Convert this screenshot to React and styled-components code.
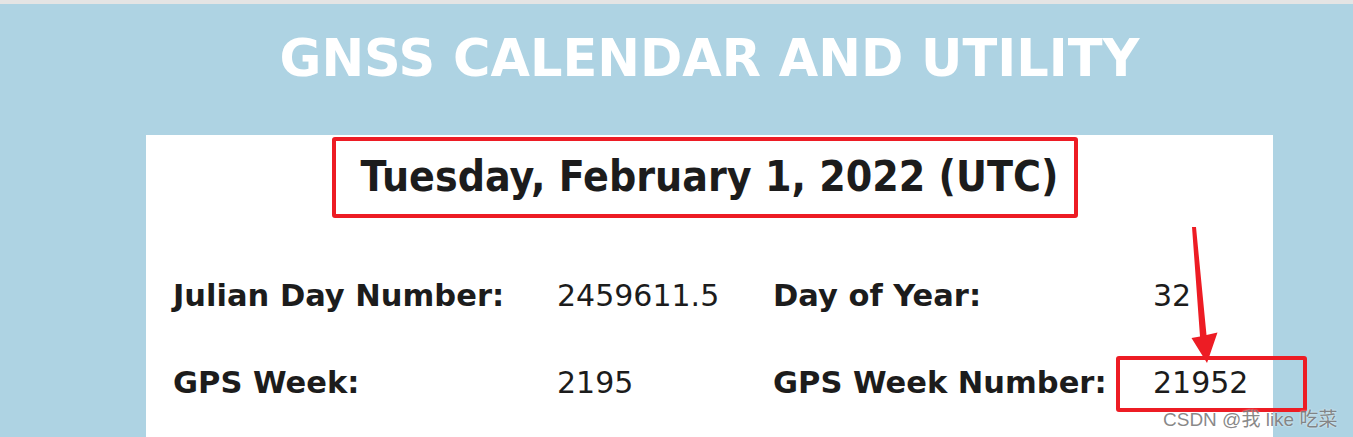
import styled, { createGlobalStyle } from "styled-components"

const GlobalStyle = createGlobalStyle`
body {
    margin: 0;
    background: #aed3e3;
    font-family: "DejaVu Sans", Verdana, sans-serif;
    color: #1c1c1c;
    overflow: hidden;
}
`

const rows = [
    { label: 'Julian Day Number:', value: '2459611.5', label2: 'Day of Year:', value2: '32' },
    { label: 'GPS Week:', value: '2195', label2: 'GPS Week Number:', value2: '21952' },
]

const App = () => {
    return (
        <Screen>
            <GlobalStyle />
            <TopStrip />
            <Page>
                <Title>GNSS CALENDAR AND UTILITY</Title>
                <Panel>
                    <DateHeading>Tuesday, February 1, 2022 (UTC)</DateHeading>
                    <InfoGrid>
                        {rows.map(r => (
                            <Row key={r.label}>
                                <Label>{r.label}</Label>
                                <Value>{r.value}</Value>
                                <Label>{r.label2}</Label>
                                <Value>{r.value2}</Value>
                            </Row>
                        ))}
                    </InfoGrid>
                </Panel>
            </Page>

            <Mark $left={332} $top={137} $width={746} $height={81} />
            <Mark $left={1116} $top={356} $width={191} $height={56} />
            <Arrow width="1353" height="437" viewBox="0 0 1353 437">
                <polygon
                    fill="#ed1c24"
                    points="1192,227 1196,227 1206.5,335 1217.5,332.5 1207,363 1191.5,338 1200,336.5"
                />
            </Arrow>
            <Watermark>CSDN @我 like 吃菜</Watermark>
        </Screen>
    )
}

const Screen = styled.div`
position: relative;
width: 1353px;
height: 437px;
overflow: hidden;
`
const TopStrip = styled.div`
height: 4px;
background: #e4e4e4;
`
const Page = styled.div`
width: 1127px;
margin-left: 146px;
display: flex;
flex-direction: column;
`
const Title = styled.h1`
margin: 24px 0 0;
text-align: center;
color: #ffffff;
font-size: 51px;
font-weight: bold;
line-height: 1.2;
`
const Panel = styled.div`
margin-top: 46px;
background: #ffffff;
padding-top: 17px;
height: 400px;
`
const DateHeading = styled.h2`
margin: 0;
text-align: center;
font-size: 42.4px;
font-weight: bold;
font-stretch: condensed;
line-height: 1.2;
`
const InfoGrid = styled.div`
margin-top: 75px;
padding-left: 27px;
display: flex;
flex-direction: column;
gap: 51px;
`
const Row = styled.div`
display: grid;
grid-template-columns: 384px 216px 380px 1fr;
font-size: 30px;
line-height: 36px;
`
const Label = styled.span`
font-weight: bold;
font-size: 30.5px;
`
const Value = styled.span`
font-weight: normal;
`
const Mark = styled.div`
position: absolute;
left: ${p => p.$left}px;
top: ${p => p.$top}px;
width: ${p => p.$width}px;
height: ${p => p.$height}px;
box-sizing: border-box;
border: 4px solid #ed1c24;
border-radius: 3px;
`
const Arrow = styled.svg`
position: absolute;
left: 0;
top: 0;
pointer-events: none;
`
const Watermark = styled.div`
position: absolute;
left: 1163px;
top: 404px;
font-family: "Liberation Sans", "Noto Sans CJK SC", sans-serif;
font-size: 19px;
color: rgba(105, 105, 105, 0.8);
text-shadow: 0 0 2px rgba(255, 255, 255, 0.9);
white-space: nowrap;
`

export default App
